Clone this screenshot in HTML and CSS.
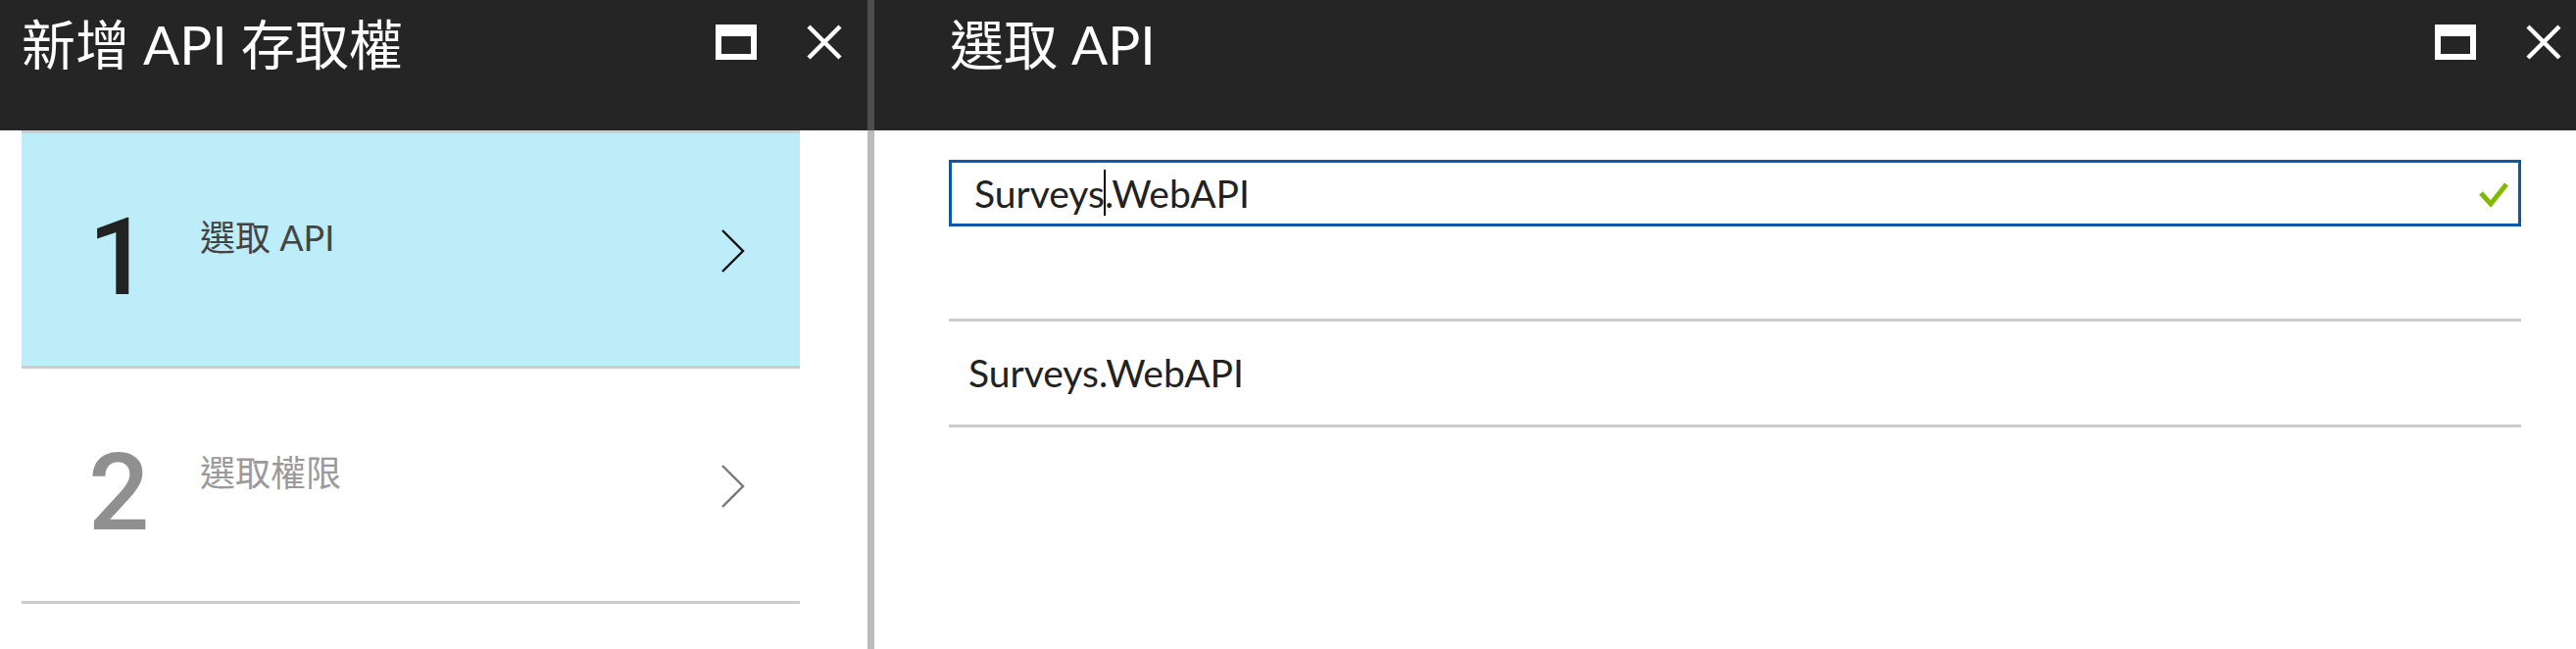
FILE: index.html
```html
<!DOCTYPE html>
<html lang="zh-Hant">
<head>
<meta charset="utf-8">
<title>新增 API 存取權</title>
<link rel="stylesheet" href="styles.css">
</head>
<body>
<div class="app">
  <section class="blade blade-left">
    <header class="header header-left">
      <h1 class="title">新增 API 存取權</h1>
      <div class="controls">
        <svg class="icon-max" width="42" height="36" viewBox="0 0 42 36"><path fill="#fff" fill-rule="evenodd" d="M0 0H42V36H0Z M6 12V30H36V12Z"/></svg>
        <svg class="icon-close" width="36" height="36" viewBox="0 0 36 36"><path d="M2 2L34 34M34 2L2 34" stroke="#fff" stroke-width="4.5" fill="none"/></svg>
      </div>
    </header>
    <div class="steps">
      <div class="step active">
        <div class="num">1</div>
        <div class="label">選取 API</div>
        <svg class="chev" width="24" height="44" viewBox="0 0 24 44"><path d="M1 1L22 22L1 43" stroke="#111" stroke-width="2.4" fill="none"/></svg>
      </div>
      <div class="step disabled">
        <div class="num">2</div>
        <div class="label">選取權限</div>
        <svg class="chev" width="24" height="44" viewBox="0 0 24 44"><path d="M1 1L22 22L1 43" stroke="#777" stroke-width="2.4" fill="none"/></svg>
      </div>
    </div>
  </section>
  <div class="divider"></div>
  <section class="blade blade-right">
    <header class="header header-right">
      <h1 class="title">選取 API</h1>
      <div class="controls">
        <svg class="icon-max" width="42" height="36" viewBox="0 0 42 36"><path fill="#fff" fill-rule="evenodd" d="M0 0H42V36H0Z M6 12V30H36V12Z"/></svg>
        <svg class="icon-close" width="36" height="36" viewBox="0 0 36 36"><path d="M2 2L34 34M34 2L2 34" stroke="#fff" stroke-width="4.5" fill="none"/></svg>
      </div>
    </header>
    <div class="picker">
      <div class="search">
        <span class="search-text">Surveys<span class="caret"></span>.WebAPI</span>
        <svg class="check" width="32" height="28" viewBox="0 0 32 28"><path d="M3 13L13 24L29 4" stroke="#7fba00" stroke-width="5" fill="none"/></svg>
      </div>
      <ul class="results">
        <li class="result">Surveys.WebAPI</li>
      </ul>
    </div>
  </section>
</div>
</body>
</html>
```
FILE: styles.css
```css
* { box-sizing: border-box; }
html, body { margin: 0; padding: 0; }
body {
  width: 2628px;
  height: 662px;
  overflow: hidden;
  background: #fff;
  font-family: Lato, "Noto Sans CJK TC", sans-serif;
  color: #222;
}
.app { display: flex; height: 662px; }
.blade-left { width: 885px; flex: none; }
.divider {
  width: 7px;
  flex: none;
  background: linear-gradient(#4e4e4e 0, #4e4e4e 133px, #bbbbbb 133px, #bbbbbb 100%);
}
.blade-right { flex: 1; }

.header {
  height: 133px;
  background: #252525;
  color: #fff;
  display: flex;
  align-items: flex-start;
}
.header-left { padding: 0 26px 0 22px; }
.header-right { padding: 0 15px 0 77px; }
.title {
  margin: 0;
  font-weight: 400;
  font-size: 55px;
  line-height: 55px;
  padding-top: 18px;
  white-space: nowrap;
}
.controls {
  margin-left: auto;
  display: flex;
  gap: 51px;
  padding-top: 25px;
}
.controls svg { display: block; }

.steps { padding: 0 69px 0 22px; }
.step {
  height: 240px;
  border-bottom: 3px solid #cccccc;
  display: flex;
  align-items: flex-start;
}
.step:first-child { height: 243px; border-top: 3px solid #cccccc; }
.step.active { background: #bdedf9; }
.num {
  width: 182px;
  flex: none;
  padding-left: 68px;
  padding-top: 72px;
  font-family: Roboto, sans-serif;
  font-weight: 500;
  font-size: 110px;
  line-height: 110px;
  color: #222;
}
.step.disabled .num { color: #909090; }
.label {
  flex: 1;
  padding-top: 88px;
  font-size: 36px;
  line-height: 36px;
  color: #444;
}
.step.disabled .label { color: #9a9a9a; }
.chev {
  display: block;
  flex: none;
  margin-top: 98px;
  margin-right: 56px;
}

.picker { padding: 30px 56px 0 76px; }
.search {
  height: 68px;
  border: 3px solid #0b5aa8;
  display: flex;
  align-items: center;
  padding: 0 9px 0 23px;
}
.search-text {
  font-size: 39px;
  line-height: 58px;
  color: #222;
  white-space: nowrap;
}
.caret {
  display: inline-block;
  width: 2px;
  height: 47px;
  margin: 0 -1px;
  background: #000;
  vertical-align: -8px;
}
.check { display: block; margin-left: auto; margin-top: 2px; }

.results {
  list-style: none;
  margin: 94px 0 0;
  padding: 0;
  border-top: 3px solid #cccccc;
}
.result {
  height: 108px;
  border-bottom: 3px solid #cccccc;
  padding-left: 20px;
  font-size: 39px;
  line-height: 105px;
  color: #222;
}
```
